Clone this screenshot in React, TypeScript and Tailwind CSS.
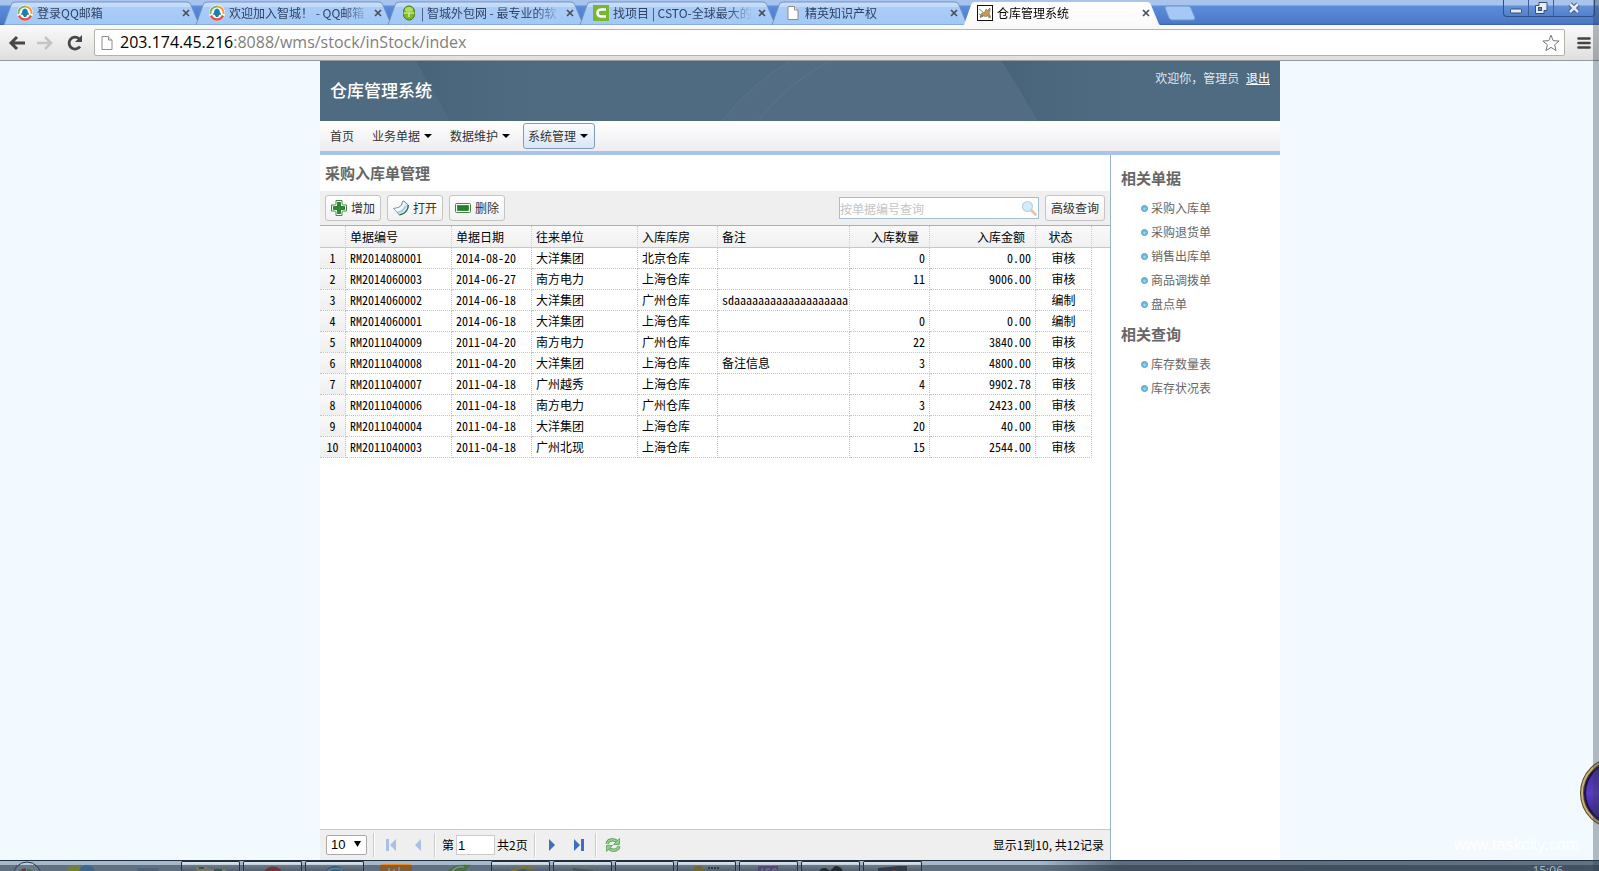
import { ReactNode } from "react";

const mono = "font-['Noto_Sans_Mono_CJK_SC','Noto_Sans_CJK_SC',monospace]";

interface TabProps {
    title: string;
    icon: ReactNode;
    active?: boolean;
}

function MailIcon() {
    return <svg viewBox="0 0 16 16" className="w-4 h-4">
        <circle cx="8" cy="8" r="8" fill="#fff" />
        <path d="M8 1.500A6.500 6.500 0 0 0 1.500 9" fill="none" stroke="#7cb45a" strokeWidth="2" />
        <path d="M8 1.500A6.500 6.500 0 0 1 14.500 9" fill="none" stroke="#e8a23a" strokeWidth="2" />
        <path d="M2 10.500A6.500 6.500 0 0 0 14 10.500" fill="none" stroke="#d9584b" strokeWidth="2.500" />
        <path d="M8 3.500c2 .2 2.800 2 2.800 3.500l1.500 2.500-2 .3L9 12H7l-1.300-2.200-2-.3L5.200 7C5.200 5.200 6 3.700 8 3.500z" fill="#1d7fa8" />
    </svg>
}

function RobotIcon() {
    return <svg viewBox="0 0 16 16" className="w-4 h-4">
        <rect x="2.500" y="1" width="11" height="14" rx="5.500" fill="#7cb928" stroke="#3f7d12" />
        <path d="M2.500 8h11M8 8v4" stroke="#e9f5c8" strokeWidth="1.200" />
        <ellipse cx="8" cy="4.500" rx="4" ry="2.500" fill="#b5dc5c" />
    </svg>
}

function CstoIcon() {
    return <svg viewBox="0 0 16 16" className="w-4 h-4">
        <rect width="16" height="16" fill="#76b733" />
        <path d="M13 4.500H8a3.500 3.500 0 0 0 0 7h5" fill="none" stroke="#fff" strokeWidth="2.600" />
    </svg>
}

function PageIcon() {
    return <svg viewBox="0 0 16 16" className="w-4 h-4 shrink-0">
        <path d="M3 1.500h6.500l3.500 3.500v9.500H3z" fill="#fff" stroke="#8d8d8d" />
        <path d="M9.500 1.500V5H13" fill="#eee" stroke="#8d8d8d" />
    </svg>
}

function CatIcon() {
    return <svg viewBox="0 0 16 16" className="w-4 h-4">
        <rect x=".5" y=".5" width="15" height="15" fill="#fff" stroke="#111" />
        <path d="M3 12l2-4 3-1 1-3 1.500 1.500L13 3v3l-1 2 1.500 4-3-1-2 .5-2-.5z" fill="#c39a5a" stroke="#6b5230" strokeWidth=".5" />
        <path d="M2 4l4 3M2 9l4 2-3 2M11 12l3 1" stroke="#777" strokeWidth=".8" fill="none" />
    </svg>
}

function Tab(props: TabProps) {
    return <div className={`relative flex items-center h-6 w-[200px] min-w-0 -mr-2 pl-[17px] ${props.active ? "z-10" : ""}`}>
        <svg viewBox="0 0 200 24" preserveAspectRatio="none" className="absolute inset-0 w-full h-full">
            <defs>
                <linearGradient id="tabBlue" x1="0" y1="0" x2="0" y2="1">
                    <stop offset="0" stopColor="#cfe0f8" />
                    <stop offset=".2" stopColor="#bfd8f8" />
                    <stop offset=".22" stopColor="#aacdf7" />
                    <stop offset="1" stopColor="#a3c8f6" />
                </linearGradient>
                <linearGradient id="tabWhite" x1="0" y1="0" x2="0" y2="1">
                    <stop offset="0" stopColor="#ffffff" />
                    <stop offset="1" stopColor="#fafafa" />
                </linearGradient>
            </defs>
            <path d="M4 24L11 4Q12 1 15 1H187Q190 1 191 4L198 21Q199 24 200 24Z" fill={props.active ? "url(#tabWhite)" : "url(#tabBlue)"} stroke={props.active ? "none" : "#6f93c6"} />
        </svg>
        <span className="relative shrink-0">{props.icon}</span>
        <button className={`relative ml-1 w-[140px] min-w-0 text-left whitespace-nowrap overflow-hidden text-xs leading-5 [mask-image:linear-gradient(to_right,black_82%,transparent)] ${props.active ? "text-black" : "text-[#2f4262]"}`}>{props.title}</button>
        <button aria-label="关闭标签页" className="relative ml-px w-4 h-4 shrink-0 flex items-center justify-center">
            <svg viewBox="0 0 8 8" className="w-2 h-2"><path d="M1 1l6 6M7 1l-6 6" stroke="#49505a" strokeWidth="1.700" /></svg>
        </button>
    </div>
}

function BrowserBar() {
    return <div className="shrink-0">
        <div className="flex items-end h-[25px] bg-[linear-gradient(to_bottom,#a9c4ec_0,#a9c4ec_5px,#5b8dda_6px,#4c79c8_23px,#3c62a5_25px)]">
            <div className="flex items-end min-w-0">
                <Tab title="登录QQ邮箱" icon={<MailIcon />} />
                <Tab title="欢迎加入智城！ - QQ邮箱" icon={<MailIcon />} />
                <Tab title="| 智城外包网 - 最专业的软" icon={<RobotIcon />} />
                <Tab title="找项目 | CSTO-全球最大的" icon={<CstoIcon />} />
                <Tab title="精英知识产权" icon={<PageIcon />} />
                <Tab title="仓库管理系统" icon={<CatIcon />} active />
            </div>
            <button aria-label="新标签页" className="ml-3 mb-1 shrink-0">
                <svg viewBox="0 0 32 16" className="w-8 h-4"><path d="M1 3Q1 1 3 1H24Q26 1 27 3L31 13Q31 15 29 15H8Q6 15 5 13Z" fill="#a5c9f6" stroke="#6d97d6" /></svg>
            </button>
            <div className="ml-auto mr-1 self-start flex h-[17px] shrink-0 rounded-b border border-t-0 border-[#2f4f86] divide-x divide-[#3d5f9a] bg-[linear-gradient(to_bottom,#a9c4ec_0,#a9c4ec_5px,#6391d8_6px,#5480cb)]">
                <button aria-label="最小化" className="w-[25px] flex items-center justify-center">
                    <svg viewBox="0 0 14 14" className="w-3.5 h-3.5"><rect x="1.500" y="8" width="11" height="4" rx="1" fill="#e4edfa" stroke="#3a4f77" /></svg>
                </button>
                <button aria-label="还原" className="w-[25px] flex items-center justify-center">
                    <svg viewBox="0 0 14 14" className="w-3.5 h-3.5">
                        <path d="M5 1.500h8v8h-3v3H1.500v-8H5z" fill="#e4edfa" stroke="#3a4f77" />
                        <rect x="4.500" y="6.500" width="3" height="3" fill="#5b87cf" stroke="#3a4f77" />
                    </svg>
                </button>
                <button aria-label="关闭" className="w-10 flex items-center justify-center">
                    <svg viewBox="0 0 14 14" className="w-3.5 h-3.5">
                        <path d="M3 3l8 8M11 3l-8 8" stroke="#3a4f77" strokeWidth="4.500" />
                        <path d="M3 3l8 8M11 3l-8 8" stroke="#e4edfa" strokeWidth="2.500" />
                    </svg>
                </button>
            </div>
        </div>
        <div className="flex items-center h-9 pl-2 pr-2 bg-linear-to-b from-[#fafafa] to-[#dfdfdf] border-b border-[#979b9c]">
            <button aria-label="后退" className="w-5 mr-2">
                <svg viewBox="0 0 18 16" className="w-[18px] h-4"><path d="M9 2L3 8l6 6M3 8h14" fill="none" stroke="#474747" strokeWidth="3" /></svg>
            </button>
            <button aria-label="前进" className="w-5 mr-2.5">
                <svg viewBox="0 0 18 16" className="w-[18px] h-4"><path d="M9 2l6 6-6 6M15 8H1" fill="none" stroke="#c4c4c4" strokeWidth="2.500" /></svg>
            </button>
            <button aria-label="刷新" className="w-5 mr-2">
                <svg viewBox="0 0 18 16" className="w-[18px] h-4">
                    <path d="M14 11.500A6 6 0 1 1 13 3.500" fill="none" stroke="#474747" strokeWidth="2.800" />
                    <path d="M16 0v7H9z" fill="#474747" />
                </svg>
            </button>
            <div className="flex flex-1 items-center h-[27px] pl-1 pr-1 bg-white border border-[#b3b3ab] rounded-xs">
                <PageIcon />
                <span className="flex-1 ml-[5px] pb-px font-['Open_Sans',sans-serif] text-base leading-6 text-[#808080]"><span className="text-black">203.174.45.216</span>:8088/wms/stock/inStock/index</span>
                <button aria-label="收藏">
                    <svg viewBox="0 0 18 18" className="w-[18px] h-[18px]"><path d="M9 1.200l2.200 5.500 5.900.3-4.500 3.800 1.500 5.800L9 13.400l-5.100 3.200 1.500-5.800L.9 7l5.900-.3z" fill="#fff" stroke="#777" /></svg>
                </button>
            </div>
            <button aria-label="菜单" className="ml-3">
                <svg viewBox="0 0 14 14" className="w-3.5 h-3.5"><path d="M1.500 2.500h11M1.500 7h11M1.500 11.500h11" stroke="#444" strokeWidth="2.600" strokeLinecap="round" /></svg>
            </button>
        </div>
    </div>
}

function Header() {
    return <header className="relative h-[60px] shrink-0 bg-[#4f6b81] text-white">
        <svg viewBox="0 0 960 60" preserveAspectRatio="none" className="absolute inset-0 w-full h-full">
            <defs>
                <linearGradient id="shade" x1="0" x2="1">
                    <stop offset="0" stopColor="#3f5b72" stopOpacity=".5" />
                    <stop offset="1" stopColor="#4f6b81" stopOpacity="0" />
                </linearGradient>
            </defs>
            <path d="M96 0L130 60H250L216 0Z" fill="url(#shade)" />
            <path d="M682 0L718 60H838L802 0Z" fill="url(#shade)" />
            <path d="M402 60Q432 22 470 0H682L718 60Z" fill="#fff" opacity=".02" />
            <path d="M402 60Q432 22 470 0M438 60Q470 20 510 0" fill="none" stroke="#7d94a6" opacity=".2" />
        </svg>
        <div className="relative flex justify-between h-full px-2.5">
            <h1 className="self-center pb-0.5 text-[17px] leading-6 font-medium">仓库管理系统</h1>
            <div className="pt-[7px] text-xs leading-5 text-[#dfe8ef]">欢迎你，管理员 <a href="#" className="ml-1 text-white underline">退出</a></div>
        </div>
    </header>
}

function NavItem(props: { label: string; menu?: boolean; active?: boolean }) {
    return <button className={`flex items-center h-[26px] pl-1 pr-1.5 rounded-[3px] border text-xs leading-4 text-[#333] ${props.active ? "border-[#7f9db9] bg-linear-to-b from-[#fbfcfe] to-[#d9e6f5]" : "border-transparent"}`}>
        {props.label}
        {props.menu && <svg viewBox="0 0 8 4" className="w-2 h-1 ml-1"><path d="M0 0h8L4 4z" fill="#000" /></svg>}
    </button>
}

function AddIcon() {
    return <svg viewBox="0 0 16 16" className="w-4 h-4">
        <path d="M5 .5h6v3q0 1.500 1.500 1.500h3v6h-3Q11 11 11 12.500v3H5v-3Q5 11 3.500 11h-3V5h3Q5 5 5 3.500z" fill="#fff" stroke="#3f8a3f" />
        <path d="M6.500 2.500h3v4h4v3h-4v4h-3v-4h-4v-3h4z" fill="#23902a" stroke="#1c6a22" strokeWidth=".8" />
    </svg>
}

// a curled sheet of paper
function OpenIcon() {
    return <svg viewBox="0 0 16 16" className="w-4 h-4">
        <path d="M.7 8.500L5.500 7.500Q9 6 9.500 1.500L11 1L15.300 5Q15 11 10.500 13.500L6.500 15Z" fill="#cfe4f4" stroke="#5c8b93" strokeWidth=".9" />
        <path d="M1.500 9L5.800 8Q9.800 6.500 10.300 2L12 3.500Q11.500 8.500 7 10.500L3.500 11.500Z" fill="#f6fafd" />
        <path d="M6.500 15L10.500 13.500Q15 11 15.300 5" fill="none" stroke="#2f7048" strokeWidth="1.300" />
        <path d="M5 12.500Q10 11.500 12.500 6" fill="none" stroke="#a5cbe6" strokeWidth="1.500" />
    </svg>
}

function RemoveIcon() {
    return <svg viewBox="0 0 16 16" className="w-4 h-4">
        <rect x=".5" y="3.500" width="15" height="9" rx="1" fill="#fff" stroke="#3f8a3f" />
        <rect x="2.500" y="5.500" width="11" height="5" fill="#23802a" stroke="#1c6a22" strokeWidth=".6" />
    </svg>
}

function ToolButton(props: { label: string; icon?: ReactNode }) {
    return <button className="flex items-center gap-1 h-[26px] px-[5px] rounded-[3px] border border-[#c5c5c5] bg-linear-to-b from-white to-[#f1f1f1] text-xs leading-4 text-[#333] whitespace-nowrap">
        {props.icon}
        {props.label}
    </button>
}

interface Row {
    code: string;
    date: string;
    unit: string;
    store: string;
    remark?: string;
    qty?: string;
    amount?: string;
    status: string;
}

const rows: Row[] = [
    { code: "RM2014080001", date: "2014-08-20", unit: "大洋集团", store: "北京仓库", qty: "0", amount: "0.00", status: "审核" },
    { code: "RM2014060003", date: "2014-06-27", unit: "南方电力", store: "上海仓库", qty: "11", amount: "9006.00", status: "审核" },
    { code: "RM2014060002", date: "2014-06-18", unit: "大洋集团", store: "广州仓库", remark: "sdaaaaaaaaaaaaaaaaaaa", status: "编制" },
    { code: "RM2014060001", date: "2014-06-18", unit: "大洋集团", store: "上海仓库", qty: "0", amount: "0.00", status: "编制" },
    { code: "RM2011040009", date: "2011-04-20", unit: "南方电力", store: "广州仓库", qty: "22", amount: "3840.00", status: "审核" },
    { code: "RM2011040008", date: "2011-04-20", unit: "大洋集团", store: "上海仓库", remark: "备注信息", qty: "3", amount: "4800.00", status: "审核" },
    { code: "RM2011040007", date: "2011-04-18", unit: "广州越秀", store: "上海仓库", qty: "4", amount: "9902.78", status: "审核" },
    { code: "RM2011040006", date: "2011-04-18", unit: "南方电力", store: "广州仓库", qty: "3", amount: "2423.00", status: "审核" },
    { code: "RM2011040004", date: "2011-04-18", unit: "大洋集团", store: "上海仓库", qty: "20", amount: "40.00", status: "审核" },
    { code: "RM2011040003", date: "2011-04-18", unit: "广州北现", store: "上海仓库", qty: "15", amount: "2544.00", status: "审核" },
];

const th = "h-[22px] font-normal border-b border-b-[#c8c8c8] border-r border-r-[#ccc] [border-right-style:dotted]";
const td = "h-[21px] px-1 border-b border-r border-dotted border-[#c4c4c4] whitespace-nowrap overflow-hidden";

function StockTable() {
    return <div className="bg-[linear-gradient(to_bottom,#fafafa_0,#f0f0f0_21px,#c8c8c8_21px,#c8c8c8_22px,white_22px)]">
        <table className={`table-fixed w-[772px] border-separate border-spacing-0 text-xs leading-4 text-black ${mono}`}>
            <colgroup>
                <col className="w-[26px]" />
                <col className="w-[106px]" />
                <col className="w-20" />
                <col className="w-[106px]" />
                <col className="w-20" />
                <col className="w-[132px]" />
                <col className="w-20" />
                <col className="w-[106px]" />
                <col className="w-14" />
            </colgroup>
            <thead>
                <tr>
                    <th className={th}></th>
                    <th className={`${th} px-1 text-left`}>单据编号</th>
                    <th className={`${th} px-1 text-left`}>单据日期</th>
                    <th className={`${th} px-1 text-left`}>往来单位</th>
                    <th className={`${th} px-1 text-left`}>入库库房</th>
                    <th className={`${th} px-1 text-left`}>备注</th>
                    <th className={`${th} pr-2.5 text-right`}>入库数量</th>
                    <th className={`${th} pr-2.5 text-right`}>入库金额</th>
                    <th className={`${th} pr-1.5 text-center`}>状态</th>
                </tr>
            </thead>
            <tbody>
                {rows.map((row, i) => (
                    <tr key={row.code}>
                        <td className={`${td} text-center bg-linear-to-b from-[#f9f9f9] to-[#efefef]`}>{i + 1}</td>
                        <td className={td}>{row.code}</td>
                        <td className={td}>{row.date}</td>
                        <td className={td}>{row.unit}</td>
                        <td className={td}>{row.store}</td>
                        <td className={td}>{row.remark}</td>
                        <td className={`${td} text-right`}>{row.qty}</td>
                        <td className={`${td} text-right`}>{row.amount}</td>
                        <td className={`${td} text-center`}>{row.status}</td>
                    </tr>
                ))}
            </tbody>
        </table>
    </div>
}

function Separator() {
    return <div className="w-0.5 h-6 bg-[#ccc] border-r border-white" />
}

function Pager() {
    return <div className="flex items-center h-[31px] shrink-0 px-1.5 bg-[#efefef] border-t border-[#c8c8c8] text-xs leading-4 text-black">
        <div className="relative">
            <select aria-label="每页记录数" className="block appearance-none w-[41px] h-5 pl-1 bg-white border border-[#a9a9a9] rounded-xs font-['Liberation_Sans',sans-serif] text-[13px] leading-4">
                <option>10</option>
                <option>20</option>
            </select>
            <svg viewBox="0 0 7 6" className="absolute right-1.5 top-1.5 w-[7px] h-1.5 pointer-events-none"><path d="M0 0h7L3.500 6z" fill="#000" /></svg>
        </div>
        <div className="ml-1.5"><Separator /></div>
        <button aria-label="首页" className="ml-2.5"><svg viewBox="0 0 12 12" className="w-3 h-3"><path d="M1 0h3v12H1zM11 0v12L5 6z" fill="#a9bfe6" /></svg></button>
        <button aria-label="上一页" className="ml-[15px]"><svg viewBox="0 0 12 12" className="w-3 h-3"><path d="M9 0v12L3 6z" fill="#a9bfe6" /></svg></button>
        <div className="ml-2.5"><Separator /></div>
        <label className="flex items-center ml-1.5">
            第
            <input defaultValue="1" className="w-[39px] h-5 ml-0.5 px-px bg-white border border-[#ccc] font-['Liberation_Sans',sans-serif] text-[13px] leading-4" />
        </label>
        <span className="ml-0.5">共2页</span>
        <div className="ml-1.5"><Separator /></div>
        <button aria-label="下一页" className="ml-2.5"><svg viewBox="0 0 12 12" className="w-3 h-3"><path d="M3 0v12l6-6z" fill="#3f6fc0" /></svg></button>
        <button aria-label="末页" className="ml-[15px]"><svg viewBox="0 0 12 12" className="w-3 h-3"><path d="M1 0v12l6-6zM8 0h3v12H8z" fill="#3f6fc0" /></svg></button>
        <div className="ml-2.5"><Separator /></div>
        <button aria-label="刷新" className="ml-2">
            <svg viewBox="0 0 16 16" className="w-4 h-4">
                <path d="M2 7Q3 2.500 8 2.800Q10 3 11.500 4" fill="none" stroke="#4a9a4e" strokeWidth="3.200" />
                <path d="M2 7Q3 2.500 8 2.800Q10 3 11.500 4" fill="none" stroke="#8fd08a" strokeWidth="1.800" />
                <path d="M14.500 1.500V7.500H8.500Z" fill="#8fd08a" stroke="#4a9a4e" strokeWidth=".7" />
                <path d="M14 9Q13 13.500 8 13.200Q6 13 4.500 12" fill="none" stroke="#4a9a4e" strokeWidth="3.200" />
                <path d="M14 9Q13 13.500 8 13.200Q6 13 4.500 12" fill="none" stroke="#8fd08a" strokeWidth="1.800" />
                <path d="M1.500 14.500V8.500H7.500Z" fill="#8fd08a" stroke="#4a9a4e" strokeWidth=".7" />
            </svg>
        </button>
        <span className="ml-auto">显示1到10, 共12记录</span>
    </div>
}

function SideLinks(props: { title: string; links: string[] }) {
    return <section>
        <h2 className="text-[15px] leading-9 h-9 font-bold text-[#666]">{props.title}</h2>
        <ul className="pl-5">
            {props.links.map((link) => (
                <li key={link} className="flex items-center h-6 text-xs leading-4 text-[#666]">
                    <svg viewBox="0 0 7 7" className="w-[7px] h-[7px] mr-[3px]">
                        <circle cx="3.500" cy="3.500" r="3" fill="#6db9e0" stroke="#5f9fc4" />
                        <circle cx="3.500" cy="4" r="1.200" fill="#8fdcf4" />
                    </svg>
                    <a href="#">{link}</a>
                </li>
            ))}
        </ul>
    </section>
}

const taskButton = "h-full w-[59px] rounded-t-xs border border-b-0 border-[#1c2c3c] bg-linear-to-b from-[#dfe8f1] to-[#8494a5] flex justify-center items-start pt-1 overflow-hidden";

// only the upper edge of the desktop bar is on screen
function TaskBar() {
    return <footer className="relative flex items-end h-[11px] shrink-0 overflow-hidden border-t border-[#1f2f40] bg-linear-to-r from-[#a5b7cb] from-65% via-[#5d6d80] via-70% to-[#5f7286]">
        <button aria-label="开始" className="ml-3 mr-6 self-start"><svg viewBox="0 0 30 10" className="w-[30px] h-2.5">
            <circle cx="15" cy="15" r="14" fill="#b9cadb" stroke="#2b3d52" />
            <path d="M8 10q3-4 6-2v3z" fill="#c0392b" />
            <path d="M15 8q4 0 6 2v2h-6z" fill="#6aa84f" />
        </svg></button>
        <button aria-label="通讯" className="mr-10 self-start"><svg viewBox="0 0 30 10" className="w-[30px] h-2.5">
            <circle cx="9" cy="12" r="8" fill="#c3d92c" />
            <circle cx="21" cy="12" r="8" fill="#4f9fde" />
        </svg></button>
        <button aria-label="桌面" className="mr-[21px] self-start"><svg viewBox="0 0 24 10" className="w-6 h-2.5"><rect x="1" y="7" width="22" height="8" rx="2" fill="#7f9bb8" /></svg></button>
        <button aria-label="文件夹" className={`${taskButton} mr-[3px]`}><svg viewBox="0 0 30 8" className="w-[30px] h-2 shrink-0"><path d="M0 1h10l2 2h18v6H0z" fill="#dcc57c" /><path d="M3 2h5M18 4h8" stroke="#3e7f3c" strokeWidth="2" /></svg></button>
        <button aria-label="音乐" className={`${taskButton} mr-[3px]`}><svg viewBox="0 0 24 8" className="w-6 h-2 shrink-0"><circle cx="12" cy="11" r="10.500" fill="#c4302b" /></svg></button>
        <button aria-label="浏览器" className={`${taskButton} mr-4`}><svg viewBox="0 0 26 8" className="w-[26px] h-2 shrink-0"><circle cx="13" cy="12" r="12" fill="#2f86b5" /><path d="M3 7q8-7 18-3" fill="none" stroke="#8fd0ea" strokeWidth="2" /></svg></button>
        <button aria-label="商城" className="mr-[34px] self-start"><svg viewBox="0 0 32 10" className="w-8 h-2.5"><rect y="3" width="32" height="12" rx="3" fill="#f08a1a" /><path d="M9 10V7M14 10V8M19 10V6" stroke="#ffe0bd" strokeWidth="2" /></svg></button>
        <button aria-label="安全" className="mr-[17px] self-start"><svg viewBox="0 0 28 10" className="w-7 h-2.5"><path d="M2 10Q8 2 26 4 20 6 20 10z" fill="#6db33f" /><path d="M6 10q5-5 12-4" fill="none" stroke="#eef6dd" strokeWidth="1.500" /></svg></button>
        <button aria-label="IE" className={`${taskButton} mr-[3px]`}><svg viewBox="0 0 28 8" className="w-7 h-2 shrink-0"><circle cx="13" cy="12" r="10.500" fill="#3c8ac9" /><path d="M2 8Q12-1 26 2" fill="none" stroke="#e6b92d" strokeWidth="2.500" /></svg></button>
        <button aria-label="记事本" className={`${taskButton} mr-[3px]`}><svg viewBox="0 0 24 8" className="w-6 h-2 shrink-0"><path d="M2 2l20 2v6H2z" fill="#6b7975" /></svg></button>
        <button aria-label="窗口" className={`${taskButton} mr-[3px]`}></button>
        <button aria-label="数据库" className={`${taskButton} mr-[3px]`}><svg viewBox="0 0 30 8" className="w-[30px] h-2 shrink-0"><rect x="2" width="9" height="10" rx="2" fill="#c99f22" /><path d="M16 2h12" stroke="#2f4a37" strokeWidth="2" strokeDasharray="2 1" /></svg></button>
        <button aria-label="图标" className={`${taskButton} mr-[3px]`}><svg viewBox="0 0 24 8" className="w-6 h-2 shrink-0"><rect x="1" width="20" height="9" fill="#7a60a6" /><path d="M5 2v6M13 3h-4v4h4M16 3h3v4h-3z" stroke="#d8cdea" fill="none" /></svg></button>
        <button aria-label="游戏" className={`${taskButton} mr-[3px]`}><svg viewBox="0 0 30 8" className="w-[30px] h-2 shrink-0"><path d="M3 8q0-7 7-6l4 3 5-5q8 0 8 8z" fill="#191c1c" /></svg></button>
        <button aria-label="角色" className={taskButton}><svg viewBox="0 0 32 8" className="w-8 h-2 shrink-0"><path d="M1 2l20-2h9v9H1z" fill="#39424d" /><circle cx="17" cy="8" r="4" fill="#a4532a" /></svg></button>
        <div className="absolute inset-x-0 bottom-0 h-1.5 bg-[#2c3846]/55"></div>
        <span className="relative ml-auto mr-9 h-1.5 font-['Open_Sans',sans-serif] text-xs leading-3 text-[#a9b2bb]">15:06</span>
    </footer>
}

export default function App() {
    return <div className="relative flex flex-col h-screen overflow-hidden bg-[#f2faff] font-['Noto_Sans_CJK_SC',sans-serif]">
        <BrowserBar />
        <div className="flex-1 min-h-0 flex justify-center pl-px">
            <div className="flex flex-col w-full max-w-[960px] bg-white">
                <Header />
                <nav className="flex items-center gap-1.5 h-[34px] shrink-0 px-[5px] border-b-4 border-[#a9c3ea] bg-linear-to-b from-white to-[#ededf0]">
                    <NavItem label="首页" />
                    <NavItem label="业务单据" menu />
                    <NavItem label="数据维护" menu />
                    <NavItem label="系统管理" menu active />
                </nav>
                <div className="flex flex-1 min-h-0">
                    <main className="flex flex-col flex-1 min-w-0 border-r border-[#99b3c4]">
                        <h2 className="h-9 shrink-0 px-[5px] text-[15px] leading-9 font-bold text-[#666]">采购入库单管理</h2>
                        <div className="flex items-center gap-1.5 h-[35px] shrink-0 px-[5px] bg-[#efefef] border-b border-[#9ab4c6]">
                            <ToolButton label="增加" icon={<AddIcon />} />
                            <ToolButton label="打开" icon={<OpenIcon />} />
                            <ToolButton label="删除" icon={<RemoveIcon />} />
                            <div className="relative ml-auto">
                                <input aria-label="按单据编号查询" placeholder="按单据编号查询" className="block w-[200px] h-[22px] pr-5 bg-white border border-[#a4bed4] text-xs leading-4 placeholder:text-[#c4c4c4]" />
                                <svg viewBox="0 0 16 16" className="absolute right-0.5 top-[3px] w-4 h-4">
                                    <path d="M10 10l4.500 4.500" stroke="#e3c39c" strokeWidth="2.500" strokeLinecap="round" />
                                    <circle cx="6.500" cy="6.500" r="5" fill="#d6ebfa" stroke="#b9d3e8" strokeWidth="1.200" />
                                </svg>
                            </div>
                            <ToolButton label="高级查询" />
                        </div>
                        <div className="flex-1 min-h-0 overflow-hidden"><StockTable /></div>
                        <Pager />
                    </main>
                    <aside className="w-[169px] shrink-0 pl-2.5 pt-[5px]">
                        <SideLinks title="相关单据" links={["采购入库单", "采购退货单", "销售出库单", "商品调拨单", "盘点单"]} />
                        <SideLinks title="相关查询" links={["库存数量表", "库存状况表"]} />
                    </aside>
                </div>
            </div>
        </div>
        <TaskBar />
        <div className="absolute bottom-3 right-5 font-['Liberation_Sans',sans-serif] text-base leading-7 text-white">www.taskcity.com</div>
        <svg viewBox="0 0 20 72" className="absolute right-0 bottom-[42px] w-5 h-[72px]">
            <defs>
                <linearGradient id="orb" x1="0" y1="0" x2="0" y2="1">
                    <stop offset="0" stopColor="#3a2490" />
                    <stop offset=".5" stopColor="#5a3cc0" />
                    <stop offset="1" stopColor="#2d1a70" />
                </linearGradient>
            </defs>
            <circle cx="37" cy="36" r="34" fill="url(#orb)" stroke="#5a4a20" strokeWidth="4" />
            <circle cx="37" cy="36" r="34" fill="none" stroke="#c6b47c" strokeWidth="2" />
            <circle cx="37" cy="36" r="31" fill="none" stroke="#1d1340" strokeWidth="2" />
        </svg>
        <div className="absolute right-0 top-0 bottom-0 z-20 w-1.5 bg-[#34404c]/35"></div>
    </div>
}
